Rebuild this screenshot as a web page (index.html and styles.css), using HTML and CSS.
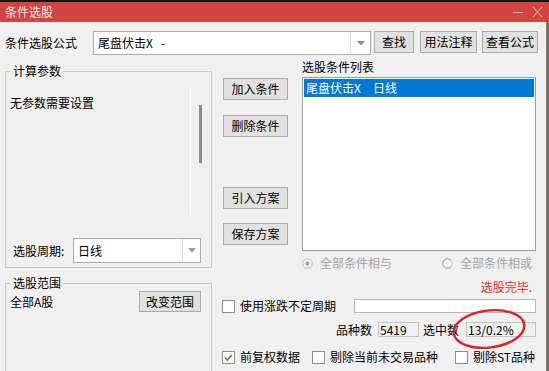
FILE: index.html
```html
<!DOCTYPE html>
<html lang="zh-CN">
<head>
<meta charset="utf-8">
<title>条件选股</title>
<link rel="stylesheet" href="styles.css">
</head>
<body>
<div class="window">
  <div class="titlebar">
    <span class="title">条件选股</span>
    <svg class="winctl" width="40" height="20" viewBox="0 0 40 20">
      <line x1="4" y1="10.5" x2="14" y2="10.5" stroke="rgba(255,255,255,0.65)" stroke-width="1"/>
      <path d="M24 5 L33 15 M33 5 L24 15" stroke="rgba(255,255,255,0.65)" stroke-width="1" fill="none"/>
    </svg>
  </div>
  <div class="content">
    <div class="formula-row">
      <span class="formula-label">条件选股公式</span>
      <div class="combo combo-formula">
        <span class="combo-text">尾盘伏击X&nbsp;&nbsp;&nbsp;-</span>
        <span class="combo-arrow"><svg width="8" height="5" viewBox="0 0 8 5"><path d="M0 0 H8 L4 4.5 Z" fill="#8a8a8a"/></svg></span>
      </div>
      <button class="btn btn-find">查找</button>
      <button class="btn btn-usage">用法注释</button>
      <button class="btn btn-view">查看公式</button>
    </div>
    <div class="main">
      <div class="left">
        <fieldset class="group group-params">
          <legend>计算参数</legend>
          <div class="params">
            <div class="params-text">无参数需要设置</div>
            <div class="params-sep"></div>
            <div class="vscroll"><div class="thumb"></div></div>
          </div>
          <div class="period-row">
            <span class="period-label">选股周期:</span>
            <div class="combo combo-period">
              <span class="combo-text">日线</span>
              <span class="combo-arrow"><svg width="8" height="5" viewBox="0 0 8 5"><path d="M0 0 H8 L4 4.5 Z" fill="#9a9a9a"/></svg></span>
            </div>
          </div>
        </fieldset>
        <fieldset class="group group-range">
          <legend>选股范围</legend>
          <div class="range-row">
            <span>全部A股</span>
            <button class="btn btn-range">改变范围</button>
          </div>
        </fieldset>
      </div>
      <div class="right">
        <div class="right-top">
          <div class="btn-col">
            <button class="btn btn-side btn-add">加入条件</button>
            <button class="btn btn-side btn-del">删除条件</button>
            <button class="btn btn-side btn-import">引入方案</button>
            <button class="btn btn-side btn-save">保存方案</button>
          </div>
          <div class="list-col">
            <div class="list-label">选股条件列表</div>
            <div class="listbox">
              <div class="list-item selected">尾盘伏击X<span class="list-period">日线</span></div>
            </div>
            <div class="radio-row">
              <span class="radio-item">
                <svg width="11" height="11" viewBox="0 0 11 11"><circle cx="5.5" cy="5.5" r="4.8" fill="#f4f4f4" stroke="#bdbdbd"/><circle cx="5.5" cy="5.5" r="2" fill="#a6a6a6"/></svg>
                <span class="radio-text">全部条件相与</span>
              </span>
              <span class="radio-item">
                <svg width="11" height="11" viewBox="0 0 11 11"><circle cx="5.5" cy="5.5" r="4.8" fill="#f4f4f4" stroke="#c4c4c4"/><path d="M8.9 2.1 A4.8 4.8 0 1 0 8.9 8.9" fill="none" stroke="#a8a8a8"/></svg>
                <span class="radio-text">全部条件相或</span>
              </span>
            </div>
          </div>
        </div>
        <div class="status">选股完毕.</div>
        <div class="opt-row">
          <span class="checkbox"></span>
          <span class="opt-text">使用涨跌不定周期</span>
          <span class="field field-period"></span>
        </div>
        <div class="count-row">
          <span>品种数</span>
          <span class="field field-total">5419</span>
          <span>选中数</span>
          <span class="field field-picked">13/0.2%</span>
        </div>
        <div class="check-row">
          <span class="check-item">
            <svg class="checkbox-svg" width="13" height="13" viewBox="0 0 13 13"><rect x="0.5" y="0.5" width="12" height="12" fill="#fff" stroke="#8f8f8f"/><path d="M3 6.6 L5.4 9 L10 3.8" fill="none" stroke="#3c9b3c" stroke-width="1.6"/></svg>
            <span class="check-text">前复权数据</span>
          </span>
          <span class="check-item check-untraded">
            <span class="checkbox"></span>
            <span class="check-text">剔除当前未交易品种</span>
          </span>
          <span class="check-item check-st">
            <span class="checkbox"></span>
            <span class="check-text">剔除ST品种</span>
          </span>
        </div>
      </div>
    </div>
  </div>
  <svg class="annotation" width="90" height="50" viewBox="0 0 90 50">
    <ellipse cx="44" cy="24" rx="35.5" ry="18.5" transform="rotate(-7 44 24)" fill="none" stroke="#d82420" stroke-width="2.4"/>
  </svg>
</div>
</body>
</html>
```
FILE: styles.css
```css
* { box-sizing: border-box; }
html, body { margin: 0; padding: 0; }
body {
  width: 549px;
  height: 371px;
  overflow: hidden;
  background: #f0f0f0;
  font-family: "Noto Sans CJK SC", "Microsoft YaHei", sans-serif;
  font-size: 12px;
  line-height: 16px;
  color: #000;
}
.window {
  position: relative;
  width: 549px;
  height: 371px;
  overflow: hidden;
  display: flex;
  flex-direction: column;
}
.titlebar {
  flex: none;
  height: 22px;
  border-top: 2px solid #151313;
  background: #d24440;
  display: flex;
  align-items: center;
  padding-left: 5px;
  color: #fbeaea;
}
.title { flex: 1; line-height: 20px; }
.winctl { display: block; flex: none; }

.content {
  flex: 1;
  min-height: 0;
  display: flex;
  flex-direction: column;
  border-right: 3px solid #77726d;
}
.formula-row {
  flex: none;
  height: 33px;
  display: flex;
  align-items: flex-start;
  padding: 9px 0 0 5px;
}
.formula-label { width: 88px; margin-top: 4px; }

.combo {
  display: flex;
  background: #fff;
  border: 1px solid #acacac;
}
.combo-text { flex: 1; padding-left: 4px; white-space: nowrap; }
.combo-arrow {
  display: flex;
  align-items: center;
  justify-content: center;
  border-left: 1px solid #dadada;
}
.combo-formula { width: 278px; height: 24px; }
.combo-formula .combo-text { line-height: 22px; }
.combo-formula .combo-arrow { width: 20px; }

.btn {
  display: block;
  height: 22px;
  padding: 0;
  margin: 0;
  border: 1px solid #adadad;
  background: #e1e1e1;
  font: inherit;
  line-height: 20px;
  color: #000;
  text-align: center;
}
.btn-find { width: 40px; margin-left: 3px; }
.btn-usage { width: 57px; margin-left: 6px; }
.btn-view { width: 56px; margin-left: 5px; }

.main {
  flex: 1;
  min-height: 0;
  display: flex;
  padding-left: 5px;
}
.left {
  width: 207px;
  flex: none;
  display: flex;
  flex-direction: column;
  padding-top: 8px;
}
.group {
  margin: 0;
  padding: 0;
  min-width: 0;
  border: 1px solid #cacaca;
  flex: none;
}
.group legend {
  margin-left: 5px;
  padding: 0 2px;
  line-height: 16px;
}
.group-params { height: 205px; }
.params {
  display: flex;
  height: 127px;
  margin-top: 9px;
}
.params-text { width: 184px; padding: 7px 0 0 4px; }
.params-sep { width: 1px; background: #fdfdfd; }
.vscroll { width: 20px; }
.thumb {
  width: 3px;
  height: 58px;
  margin: 17px 0 0 8px;
  background: #8c8c8c;
}
.period-row {
  display: flex;
  align-items: center;
  margin-top: 23px;
  padding-left: 7px;
}
.period-label { width: 60px; }
.combo-period { width: 128px; height: 25px; }
.combo-period .combo-text { line-height: 23px; }
.combo-period .combo-arrow { width: 18px; }

.group-range { height: 97px; margin-top: 7px; }
.range-row {
  display: flex;
  align-items: center;
  height: 21px;
  padding: 0 10px 0 4px;
}
.btn-range { width: 62px; height: 21px; line-height: 19px; margin-left: auto; }

.right {
  width: 314px;
  flex: none;
  margin-left: 10px;
  display: flex;
  flex-direction: column;
}
.right-top { display: flex; }
.btn-col {
  width: 66px;
  padding-left: 1px;
  display: flex;
  flex-direction: column;
}
.btn-side { width: 65px; }
.btn-add { margin-top: 23px; }
.btn-del { margin-top: 15px; }
.btn-import { margin-top: 50px; }
.btn-save { margin-top: 14px; }

.list-col { width: 234px; margin-left: 14px; }
.list-label { margin-top: 4px; }
.listbox {
  margin-top: 2px;
  height: 174px;
  background: #fff;
  border: 1px solid #9c9c9c;
  padding: 1px;
}
.list-item {
  height: 18px;
  line-height: 18px;
  padding-left: 2px;
  white-space: nowrap;
}
.list-item.selected { background: #0078d7; color: #fff; }
.list-period { margin-left: 12px; }

.radio-row {
  display: flex;
  justify-content: space-between;
  height: 16px;
  margin-top: 4px;
  padding-right: 4px;
  color: #a6a6a6;
}
.radio-item { display: flex; align-items: center; }
.radio-item svg { display: block; }
.radio-text { margin-left: 7px; }

.status {
  margin-top: 8px;
  text-align: right;
  padding-right: 4px;
  color: #e22d2b;
}
.opt-row {
  display: flex;
  align-items: center;
  height: 14px;
  margin-top: 4px;
}
.checkbox {
  display: block;
  width: 13px;
  height: 13px;
  background: #fff;
  border: 1px solid #8f8f8f;
  flex: none;
}
.checkbox-svg { display: block; flex: none; }
.opt-text { margin-left: 5px; }
.field {
  display: block;
  height: 15px;
  line-height: 13px;
  border: 1px solid #c2c2c2;
  padding-left: 1px;
}
.field-period {
  width: 182px;
  height: 14px;
  margin-left: auto;
  background: #fff;
  border-color: #b8b8b8;
}
.count-row {
  display: flex;
  justify-content: flex-end;
  align-items: center;
  height: 15px;
  margin-top: 9px;
}
.field-total { width: 41px; margin: 0 4px 0 6px; }
.field-picked { width: 70px; margin-left: 7px; }

.check-row {
  display: flex;
  align-items: center;
  height: 14px;
  margin-top: 13px;
}
.check-item { display: flex; align-items: center; }
.check-text { margin-left: 5px; }
.check-untraded { margin-left: 12px; }
.check-st { margin-left: auto; padding-right: 1px; }

.annotation {
  position: absolute;
  left: 445px;
  top: 305px;
}
```
